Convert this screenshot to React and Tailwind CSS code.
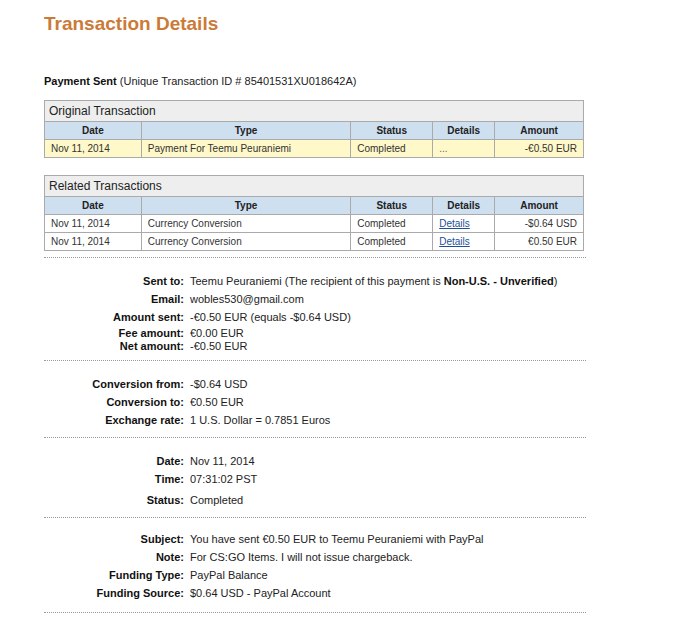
const original = [
  { date: 'Nov 11, 2014', type: 'Payment For Teemu Peuraniemi', status: 'Completed', details: null, amount: '-€0.50 EUR' },
];

const related = [
  { date: 'Nov 11, 2014', type: 'Currency Conversion', status: 'Completed', details: 'Details', amount: '-$0.64 USD' },
  { date: 'Nov 11, 2014', type: 'Currency Conversion', status: 'Completed', details: 'Details', amount: '€0.50 EUR' },
];

function TxTable({ title, rows, highlight = false }) {
  const cell = 'border border-[#aaaaaa] px-[6px] h-[18px] leading-[17px]';
  return (
    <table className="w-[540px] border-collapse text-[10px] text-[#333]">
      <colgroup>
        <col className="w-[97px]" />
        <col className="w-[210px]" />
        <col className="w-[82px]" />
        <col className="w-[62px]" />
        <col className="w-[89px]" />
      </colgroup>
      <thead>
        <tr>
          <th colSpan={5} className="border border-[#aaaaaa] bg-[#eeeeee] text-left font-normal text-[12px] text-[#222] px-[4px] h-[21px]">
            {title}
          </th>
        </tr>
        <tr className="bg-[#cedff0] text-[#222]">
          <th className={`${cell} font-bold text-center`}>Date</th>
          <th className={`${cell} font-bold text-center`}>Type</th>
          <th className={`${cell} font-bold text-center`}>Status</th>
          <th className={`${cell} font-bold text-center`}>Details</th>
          <th className={`${cell} font-bold text-center`}>Amount</th>
        </tr>
      </thead>
      <tbody>
        {rows.map((r, i) => (
          <tr key={i} className={highlight ? 'bg-[#fff8c9]' : 'bg-white'}>
            <td className={cell}>{r.date}</td>
            <td className={cell}>{r.type}</td>
            <td className={cell}>{r.status}</td>
            <td className={cell}>
              {r.details ? (
                <a href="#" className="text-[#1d4f9a] underline">{r.details}</a>
              ) : (
                <span className="text-[#666]">...</span>
              )}
            </td>
            <td className={`${cell} text-right`}>{r.amount}</td>
          </tr>
        ))}
      </tbody>
    </table>
  );
}

function Row({ label, children, className = 'h-[18px] leading-[18px]' }) {
  return (
    <div className={`flex ${className}`}>
      <div className="w-[146px] pr-[6px] text-right font-bold text-[#111] shrink-0">{label}</div>
      <div className="text-[#222] whitespace-nowrap">{children}</div>
    </div>
  );
}

function Sep() {
  return <div className="w-[542px] border-t border-dotted border-[#9a9a9a]" />;
}

export default function App() {
  return (
    <div className="bg-white min-h-[622px] w-[689px] pl-[44px] pt-[12px] font-['Liberation_Sans',Arial,sans-serif]">
      <h1 className="text-[19px] leading-[24px] font-bold text-[#cc7a38]">Transaction Details</h1>

      <p className="mt-[38px] text-[11px] leading-[14px] text-[#222]">
        <span className="font-bold text-[#111]">Payment Sent</span> (Unique Transaction ID # 85401531XU018642A)
      </p>

      <div className="mt-[12px]">
        <TxTable title="Original Transaction" rows={original} highlight />
      </div>

      <div className="mt-[17px]">
        <TxTable title="Related Transactions" rows={related} />
      </div>

      <div className="mt-[6px] text-[11px]">
        <Sep />
        <div className="pt-[14px] pb-[7px]">
          <Row label="Sent to:">
            Teemu Peuraniemi (The recipient of this payment is <span className="font-bold text-[#111]">Non-U.S. - Unverified</span>)
          </Row>
          <Row label="Email:">wobles530@gmail.com</Row>
          <Row label="Amount sent:">-€0.50 EUR (equals -$0.64 USD)</Row>
          <div className="mt-[1px]">
            <Row label="Fee amount:" className="h-[13px] leading-[13px]">€0.00 EUR</Row>
            <Row label="Net amount:" className="h-[13px] leading-[13px]">-€0.50 EUR</Row>
          </div>
        </div>
        <Sep />
        <div className="pt-[14px] pb-[8px]">
          <Row label="Conversion from:">-$0.64 USD</Row>
          <Row label="Conversion to:">€0.50 EUR</Row>
          <Row label="Exchange rate:">1 U.S. Dollar = 0.7851 Euros</Row>
        </div>
        <Sep />
        <div className="pt-[14px] pb-[8px]">
          <Row label="Date:">Nov 11, 2014</Row>
          <Row label="Time:">07:31:02 PST</Row>
          <div className="mt-[3px]">
            <Row label="Status:">Completed</Row>
          </div>
        </div>
        <Sep />
        <div className="pt-[12px] pb-[10px]">
          <Row label="Subject:">You have sent €0.50 EUR to Teemu Peuraniemi with PayPal</Row>
          <Row label="Note:">For CS:GO Items. I will not issue chargeback.</Row>
          <Row label="Funding Type:">PayPal Balance</Row>
          <Row label="Funding Source:">$0.64 USD - PayPal Account</Row>
        </div>
        <Sep />
      </div>
    </div>
  );
}
